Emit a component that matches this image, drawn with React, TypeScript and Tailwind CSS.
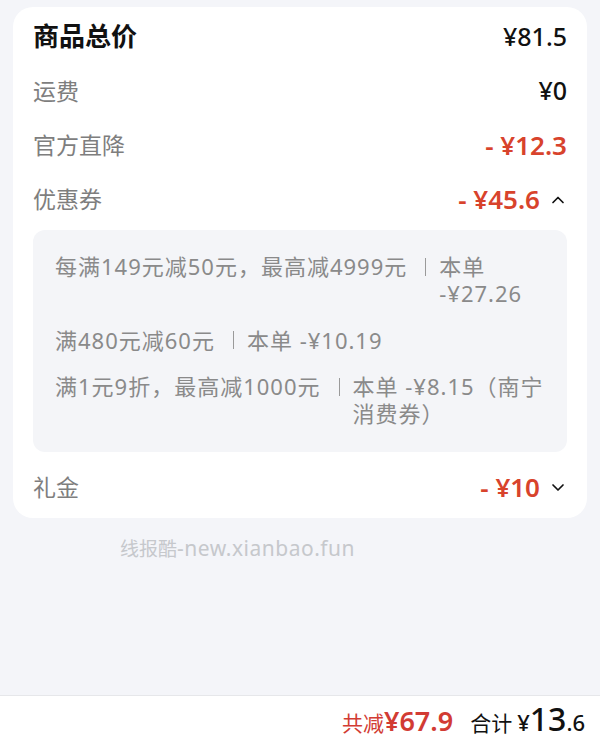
import React from "react";

const Chevron: React.FC<{ up?: boolean }> = ({ up }) => (
  <svg width="14" height="9" viewBox="0 0 14 9" className="ml-[11px] mr-[2px]">
    <polyline
      points={up ? "2,7.5 7,2.5 12,7.5" : "2,2 7,7 12,2"}
      fill="none"
      stroke="#111"
      strokeWidth="1.7"
      strokeLinecap="round"
      strokeLinejoin="round"
    />
  </svg>
);

const Row: React.FC<{ label: string; children: React.ReactNode; className?: string }> = ({
  label,
  children,
  className = "",
}) => (
  <div className={`h-[54px] flex items-center justify-between ${className}`}>
    <span className="text-[23px] text-[#7e7e7e]">{label}</span>
    <div className="flex items-center">{children}</div>
  </div>
);

// \u2060 keeps "-¥" glued to the amount when the line wraps
const coupons = [
  { rule: "每满149元减50元，最高减4999元", save: "本单 -\u2060¥27.26" },
  { rule: "满480元减60元", save: "本单 -\u2060¥10.19" },
  { rule: "满1元9折，最高减1000元", save: "本单 -\u2060¥8.15（南宁消费券）" },
];

const App: React.FC = () => {
  return (
    <div className="h-[742px] flex flex-col bg-[#f4f5f9] font-['Noto_Sans','Noto_Sans_CJK_SC',sans-serif]">
      <div className="flex-1 pt-[7px] px-[13px]">
        <div className="bg-white rounded-[20px] px-[20px] pt-[2px] pb-[4px]">
          <div className="h-[55px] flex items-center justify-between">
            <span className="text-[26px] font-bold text-[#111]">商品总价</span>
            <span className="text-[25px] font-medium text-[#111]">¥81.5</span>
          </div>
          <Row label="运费">
            <span className="text-[25px] font-medium text-[#111]">¥0</span>
          </Row>
          <Row label="官方直降">
            <span className="text-[26px] font-semibold text-[#d8432c]">- ¥12.3</span>
          </Row>
          <Row label="优惠券">
            <span className="text-[26px] font-semibold text-[#d8432c]">- ¥45.6</span>
            <Chevron up />
          </Row>

          <div className="mt-[4px] rounded-[12px] bg-[#f4f5f8] pl-[22px] pr-[20px] pt-[23px] pb-[25px] flex flex-col gap-[19.5px] text-[22px] leading-[27px] tracking-[1px] text-[#8a8a8a]">
            {coupons.map((c) => (
              <div key={c.rule} className="flex items-start">
                <span className="whitespace-nowrap">{c.rule}</span>
                <span className="h-[27px] ml-[18px] mr-[13px] flex items-center">
                  <span className="w-px h-[18px] bg-[#9a9a9a]" />
                </span>
                <span className="flex-1 min-w-0">{c.save}</span>
              </div>
            ))}
          </div>

          <Row label="礼金" className="mt-[8px]">
            <span className="text-[26px] font-semibold text-[#d8432c]">- ¥10</span>
            <Chevron />
          </Row>
        </div>

        <div className="mt-[15px] pl-[107px] text-[#c6c8cc] flex items-baseline">
          <span className="text-[19px]">线报酷</span>
          <span className="text-[21px] tracking-[0.5px]">-new.xianbao.fun</span>
        </div>
      </div>

      <div className="h-[47px] border-t border-[#e6e7ea] bg-white flex items-center justify-end pr-[15px]">
        <div className="flex items-baseline leading-none">
          <span className="text-[21px] text-[#d23b33]">共减</span>
          <span className="text-[27px] font-semibold text-[#d23b33]">¥67.9</span>
          <span className="ml-[17px] text-[21px] text-[#111]">合计</span>
          <span className="ml-[5px] text-[22px] font-medium text-[#111]">¥</span>
          <span className="text-[32px] font-medium text-[#111]">13</span>
          <span className="text-[22px] font-medium text-[#111]">.6</span>
        </div>
      </div>
    </div>
  );
};

export default App;
